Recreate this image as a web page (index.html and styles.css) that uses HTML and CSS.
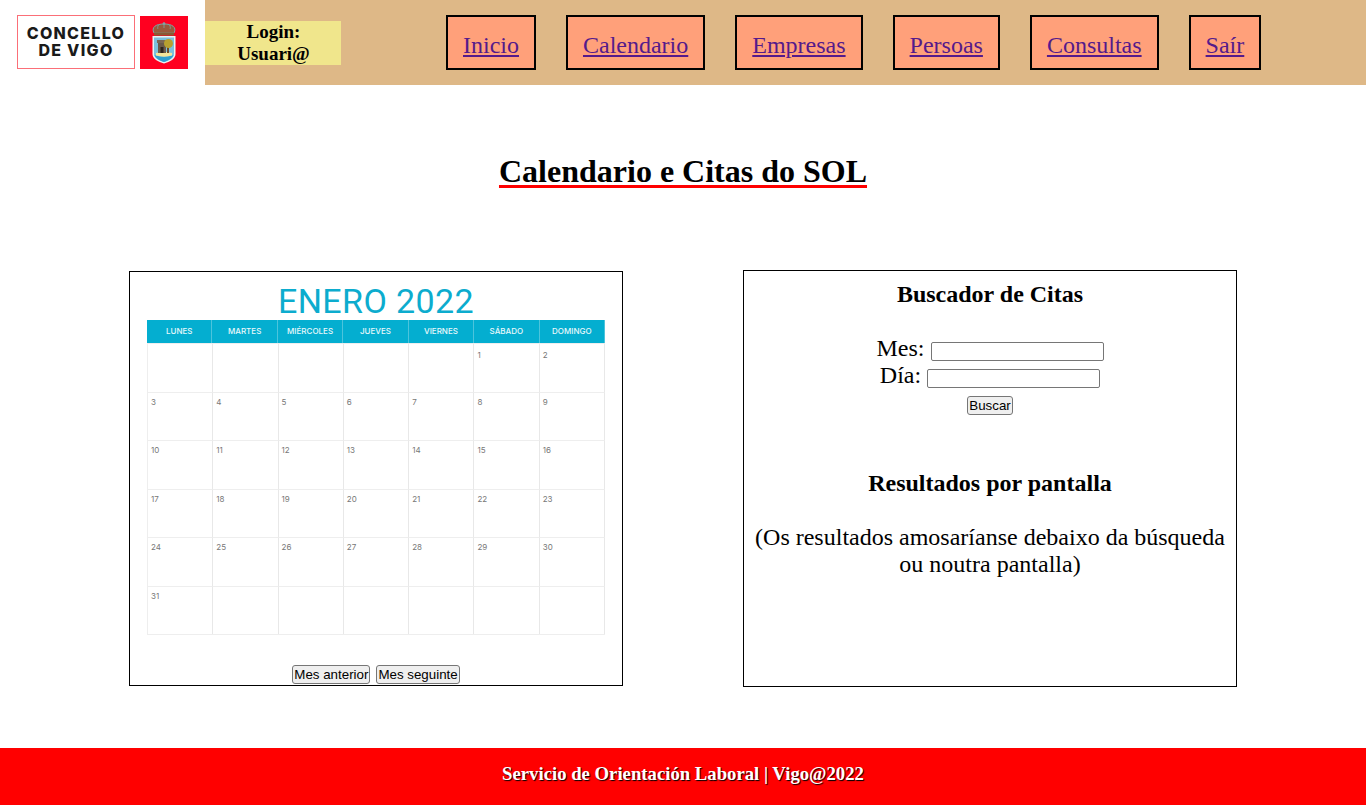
FILE: index.html
```html
<!DOCTYPE html>
<html lang="gl">

<head>
  <meta charset="UTF-8">
  <meta name="viewport" content="width=device-width, initial-scale=1.0">
  <title>Calendario e Citas do SOL</title>
  <link rel="stylesheet" href="styles.css">
</head>

<body>
  <header class="cabecera">
    <div class="logo">
      <div class="logo-texto">CONCELLO<br>DE VIGO</div>
      <div class="logo-escudo">
        <svg width="24" height="42" viewBox="0 0 24 42">
          <path d="M2 11 C-1 5 4 2 12 2 C20 2 25 5 22 11 Z" fill="#9a5a3c" stroke="#7fa6a6" stroke-width="1"/>
          <path d="M12 2 V6 M6.500 3 C5.500 5 5.500 6 6 7 M17.500 3 C18.500 5 18.500 6 18 7" stroke="#7fa6a6" stroke-width="0.8" fill="none"/>
          <circle cx="12" cy="1.500" r="1.300" fill="#7fa6a6"/>
          <rect x="2" y="10.500" width="20" height="3" fill="#8a5a34"/>
          <path d="M0.500 14 H23.500 V32 C23.500 37 18 39.500 12 41.500 C6 39.500 0.500 37 0.500 32 Z" fill="#eaf3f4"/>
          <path d="M2 15.500 H22 V32 C22 36 17 38.500 12 40 C7 38.500 2 36 2 32 Z" fill="#7cc0dc"/>
          <path d="M2.500 33 C8 35 16 35 21.500 33 C20 37 16 38.500 12 40 C8 38.500 4 37 2.500 33 Z" fill="#2f9fd0"/>
          <path d="M4 31 C8 29.500 16 29.500 20 31 V33.500 C15 35 9 35 4 33.500 Z" fill="#f4e59a"/>
          <rect x="6" y="20" width="8" height="11" fill="#6b5a4a"/>
          <rect x="5" y="18" width="10" height="3" fill="#7a6754"/>
          <rect x="8.500" y="25" width="3" height="6" fill="#2e241c"/>
          <rect x="15" y="24" width="2" height="7" fill="#6b4a2a"/>
          <circle cx="16.500" cy="21.500" r="4.500" fill="#b7a02f"/>
        </svg>
      </div>
    </div>
    <div class="barra">
      <div class="login"><strong>Login:<br>Usuari@</strong></div>
      <nav class="menu">
        <a href="#">Inicio</a>
        <a href="#">Calendario</a>
        <a href="#">Empresas</a>
        <a href="#">Persoas</a>
        <a href="#">Consultas</a>
        <a href="#">Saír</a>
      </nav>
    </div>
  </header>

  <main>
    <h1 class="titulo"><span>Calendario e Citas do SOL</span></h1>

    <div class="paneles">
      <!-- Calendario -->
      <section class="panel panel-calendario">
        <div class="mes">ENERO 2022</div>
        <div class="dias-semana">
          <div>LUNES</div>
          <div>MARTES</div>
          <div>MIÉRCOLES</div>
          <div>JUEVES</div>
          <div>VIERNES</div>
          <div>SÁBADO</div>
          <div>DOMINGO</div>
        </div>
        <div class="dias">
          <div></div><div></div><div></div><div></div><div></div><div>1</div><div>2</div>
          <div>3</div><div>4</div><div>5</div><div>6</div><div>7</div><div>8</div><div>9</div>
          <div>10</div><div>11</div><div>12</div><div>13</div><div>14</div><div>15</div><div>16</div>
          <div>17</div><div>18</div><div>19</div><div>20</div><div>21</div><div>22</div><div>23</div>
          <div>24</div><div>25</div><div>26</div><div>27</div><div>28</div><div>29</div><div>30</div>
          <div>31</div><div></div><div></div><div></div><div></div><div></div><div></div>
        </div>
        <div class="botones-mes">
          <button>Mes anterior</button>
          <button>Mes seguinte</button>
        </div>
      </section>

      <!-- Buscador -->
      <section class="panel panel-buscador">
        <h3>Buscador de Citas</h3>
        <form class="buscador">
          <div><label>Mes:</label> <input type="text"></div>
          <div><label>Día:</label> <input type="text"></div>
          <button type="button">Buscar</button>
        </form>
        <h3 class="resultados">Resultados por pantalla</h3>
        <p>(Os resultados amosaríanse debaixo da búsqueda ou noutra pantalla)</p>
      </section>
    </div>
  </main>

  <footer class="pie">
    <strong>Servicio de Orientación Laboral | Vigo@2022</strong>
  </footer>
</body>

</html>
```

FILE: styles.css
```css
* {
  box-sizing: border-box;
}

body {
  margin: 0;
  font-family: "Liberation Serif", serif;
  color: #000;
  background-color: #fff;
}

.cabecera {
  display: flex;
  height: 85px;
}

.logo {
  width: 205px;
  display: flex;
  align-items: flex-start;
  gap: 5px;
  padding: 15px 0 0 17px;
}

.logo-texto {
  width: 118px;
  height: 54px;
  border: 1px solid #fb6f78;
  font-family: "Inter", sans-serif;
  font-weight: 800;
  font-size: 16px;
  line-height: 17px;
  letter-spacing: 1.3px;
  text-align: center;
  color: #1a1a1a;
  padding-top: 9px;
}

.logo-escudo {
  width: 48px;
  height: 53px;
  margin-top: 1px;
  background-color: #ff0020;
  display: flex;
  align-items: center;
  justify-content: center;
}

.barra {
  flex: 1;
  display: flex;
  align-items: center;
  background-color: burlywood;
}

.login {
  width: 136px;
  height: 44px;
  margin-top: 1px;
  padding-left: 1px;
  background-color: khaki;
  font-size: 19px;
  line-height: 22px;
  text-align: center;
}

.menu {
  display: flex;
  gap: 30px;
  margin-left: 105px;
}

.menu a {
  display: block;
  height: 55px;
  padding: 0 15px;
  border: 2px solid #000;
  background-color: lightsalmon;
  font-size: 24px;
  line-height: 57px;
  color: #551a8b;
}

.titulo {
  margin: 68px 0 0;
  font-size: 32px;
  line-height: 37px;
  text-align: center;
}

.titulo span {
  text-decoration: underline #f00 3px;
  text-underline-offset: 3px;
}

.paneles {
  display: flex;
  justify-content: center;
  align-items: center;
  gap: 120px;
  margin-top: 80px;
}

.panel {
  width: 494px;
  border: 1px solid #000;
}

.panel-calendario {
  height: 415px;
  padding: 12px 17px 0;
  font-family: "Inter", sans-serif;
}

.mes {
  height: 36px;
  font-family: "Roboto", sans-serif;
  font-size: 34px;
  line-height: 34px;
  letter-spacing: 0.4px;
  text-align: center;
  color: #0cacce;
}

.dias-semana,
.dias {
  display: grid;
  grid-template-columns: repeat(7, 1fr);
  width: 458px;
}

.dias-semana div {
  height: 23px;
  background-color: #04aed0;
  border-right: 1px solid #4cc4dc;
  color: #e8f8fb;
  font-size: 8px;
  font-weight: 500;
  line-height: 23px;
  text-align: center;
}

.dias {
  grid-auto-rows: 48.5px;
  border-left: 1px solid #eee;
  border-bottom: 1px solid #eee;
}

.dias div {
  border-right: 1px solid #e8e8e8;
  border-top: 1px solid #eee;
  padding: 4px 0 0 3px;
  font-size: 8px;
  line-height: 10px;
  color: #777;
}

.dias div:nth-child(-n+7) {
  padding-top: 6px;
}

.botones-mes {
  display: flex;
  justify-content: center;
  gap: 6px;
  margin-top: 30px;
}

button {
  height: 19px;
  padding: 0 1px;
  font-family: "Liberation Sans", sans-serif;
  font-size: 13.33px;
  color: #000;
  background-color: #efefef;
  border: 1px solid #767676;
  border-radius: 3px;
}

.panel-buscador {
  height: 417px;
  padding: 0 10px;
  font-size: 24px;
  line-height: 27px;
  text-align: center;
}

.panel-buscador h3 {
  margin: 10px 0 0;
  font-size: 24px;
  line-height: 27px;
}

.buscador {
  margin-top: 27px;
}

.buscador input {
  width: 173px;
  height: 19px;
  padding: 1px 2px;
  border: 1px solid #767676;
  border-radius: 2px;
  vertical-align: baseline;
}

.buscador button {
  display: block;
  margin: 7px auto 0;
}

.panel-buscador .resultados {
  margin-top: 55px;
}

.panel-buscador p {
  margin: 27px 0 0;
}

.pie {
  margin-top: 61px;
  height: 57px;
  background-color: #f00;
  color: #fff;
  font-size: 18.72px;
  line-height: 51px;
  text-align: center;
  text-shadow: 1px 1px 1px #000;
}
```
